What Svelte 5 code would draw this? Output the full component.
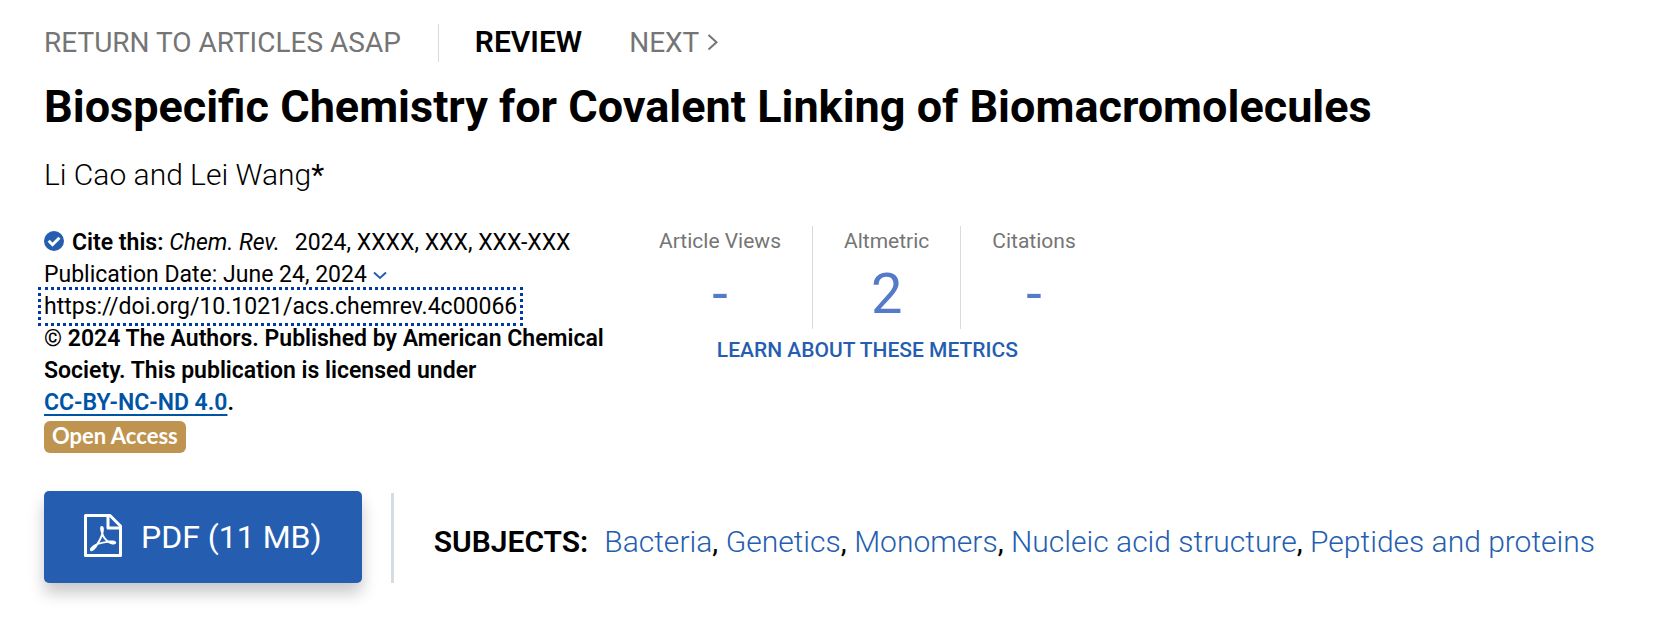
<script>
  const metrics = [
    { label: 'Article Views', value: '-' },
    { label: 'Altmetric', value: '2' },
    { label: 'Citations', value: '-' }
  ];
  const subjects = ['Bacteria', 'Genetics', 'Monomers', 'Nucleic acid structure', 'Peptides and proteins'];
</script>

<main>
  <nav>
    <a class="return" href="#articles">RETURN TO ARTICLES ASAP</a>
    <span class="kind">REVIEW</span>
    <a class="next" href="#next">NEXT
      <svg width="12" height="18" viewBox="0 0 12 18" fill="none" stroke="currentColor" stroke-width="2" aria-hidden="true"><path d="M1.5 1 9.5 8.200 1.5 15.500" /></svg>
    </a>
  </nav>

  <h1>Biospecific Chemistry for Covalent Linking of Biomacromolecules</h1>
  <p class="authors">Li Cao and Lei Wang<b>*</b></p>

  <div class="details">
    <section class="info">
      <div class="cite">
        <svg width="20" height="20" viewBox="0 0 20 20" aria-hidden="true"><circle cx="10" cy="10" r="10" fill="#255eb0" /><path d="M4.7 9.8 8.5 13.7 15.4 6.7" fill="none" stroke="#fff" stroke-width="3" /></svg>
        <span><strong>Cite this:</strong> <i>Chem. Rev.</i></span>
        <span class="issue">2024, XXXX, XXX, XXX-XXX</span>
      </div>
      <div class="date">Publication Date: June 24, 2024
        <button aria-label="Publication history"><svg width="14" height="9" viewBox="0 0 14 9" fill="none" stroke="#255eb0" stroke-width="2" aria-hidden="true"><path d="m1 1.5 6 5.500 6-5.500" /></svg></button>
      </div>
      <div><a class="doi" href="https://doi.org/10.1021/acs.chemrev.4c00066">https://doi.org/10.1021/acs.chemrev.4c00066</a></div>
      <div class="license">© 2024 The Authors. Published by American Chemical Society. This publication is licensed under<br /><a href="#license">CC-BY-NC-ND 4.0</a>.</div>
      <span class="open">Open Access</span>
    </section>

    <section class="metrics">
      <dl>
        {#each metrics as m}
          <div>
            <dt>{m.label}</dt>
            <dd>{m.value}</dd>
          </div>
        {/each}
      </dl>
      <a href="#metrics">LEARN ABOUT THESE METRICS</a>
    </section>
  </div>

  <div class="bottom">
    <button class="pdf">
      <svg width="38" height="43" viewBox="0 0 38 43" fill="none" stroke="#fff" stroke-linejoin="round" aria-hidden="true">
        <path d="M1.5 1.5h24.500l10.500 10.500v29.500h-35z" stroke-width="3" />
        <path d="M24 2v12h12" stroke-width="3" />
        <path fill="#fff" stroke="none" fill-rule="evenodd" d="M17.500 12c2.800 0 2.800 3.500 1.800 7.800 1 2.700 2.600 5 4.900 6.800 4.500-.5 8-.1 8 1.900 0 2.600-4.300 2.500-8.300.2-3.400.3-6.700 1-9.800 2-2.600 4.500-5.200 7-7.200 6.500-2.700-1.200.2-5 5.600-7.600 2.200-3.500 3.900-7 4.800-10.100-1.500-4.300-1.500-7.500.2-7.500m.8 10.500c-.8 2.200-1.800 4.300-2.900 6.200 2.300-.7 4.500-1.200 6.700-1.500-1.500-1.400-2.800-3-3.800-4.700" />
      </svg>
      PDF (11 MB)
    </button>
    <div class="subjects">
      <strong>SUBJECTS:</strong>
      <p>{#each subjects as s, i}<a href="#subject">{s}</a>{#if i < subjects.length - 1}{', '}{/if}{/each}</p>
    </div>
  </div>
</main>

<style>
  :global(body) { margin: 0; background: #fff; }
  main {
    padding: 24px 44px 36px;
    font-family: Roboto, sans-serif;
    font-size: 23px;
    line-height: 32px;
    color: #000;
  }
  a { color: #255eb0; text-decoration: none; }
  button { border: 0; padding: 0; background: none; font: inherit; cursor: pointer; }
  svg { flex: none; }
  nav { display: flex; align-items: center; height: 38px; font-size: 28px; line-height: 38px; }
  nav a { color: #757575; }
  .return { padding-right: 37px; border-right: 1px solid #d5dde1; }
  .kind { margin: 0 47px 0 36px; padding-bottom: 2px; font-size: 30px; line-height: 36px; font-weight: 600; }
  .next { display: flex; align-items: center; gap: 8px; }
  h1 { margin: 17px 0 0; font-size: 45px; line-height: 56px; font-weight: 700; }
  .authors { margin: 20px 0 0; font-size: 30px; line-height: 40px; font-weight: 300; }
  .authors b { font-weight: 400; }
  .details { display: flex; align-items: flex-start; gap: 35px; margin-top: 31px; }
  .info { width: 580px; }
  .cite { display: flex; align-items: center; gap: 8px; line-height: 33px; }
  .cite svg { margin-bottom: 4px; }
  .issue { margin-left: 7px; }
  strong { font-weight: 600; }
  .date { display: flex; align-items: center; gap: 6px; }
  .date button { display: flex; }
  .doi { color: #000; outline: 3px dotted #0039a6; outline-offset: 3px; }
  .license { font-weight: 600; }
  .license a { color: #0054a6; text-decoration: underline; text-decoration-thickness: 2px; text-underline-offset: 4px; }
  .open {
    display: inline-block;
    margin-top: 2px;
    padding: 0 8px 2px;
    border-radius: 6px;
    background: #bf9450;
    color: #fff;
    font: 700 22px/30px Lato, sans-serif;
  }
  .metrics { display: flex; flex-direction: column; align-items: center; gap: 5px; font-size: 21px; }
  dl { display: flex; margin: 0; text-align: center; }
  dl div { height: 103px; padding: 0 31px; border-right: 1px solid #d5dde1; }
  dl div:first-child { padding-left: 0; }
  dl div:last-child { padding-right: 0; border: 0; }
  dt { color: #757575; line-height: 30px; }
  dd { margin: 4px 0 0; color: #557bc8; font-size: 56px; line-height: 68px; }
  .metrics a { font-weight: 500; }
  .bottom { display: flex; align-items: flex-end; margin-top: 38px; }
  .pdf {
    display: flex;
    align-items: center;
    gap: 19px;
    height: 92px;
    padding: 0 40px;
    border-radius: 5px;
    background: #255eb0;
    box-shadow: 0 10px 16px rgba(0, 0, 0, .22);
    color: #fff;
    font-size: 32px;
    white-space: nowrap;
  }
  .pdf svg { margin-bottom: 4px; }
  .subjects {
    display: flex;
    align-items: baseline;
    gap: 16px;
    min-height: 90px;
    box-sizing: border-box;
    margin-left: 29px;
    padding: 29px 0 0 40px;
    border-left: 3px solid #d5dde1;
    font-size: 30px;
    line-height: 40px;
  }
  .subjects p { margin: 0; font-weight: 400; }
  .subjects a { font-weight: 300; }
</style>
